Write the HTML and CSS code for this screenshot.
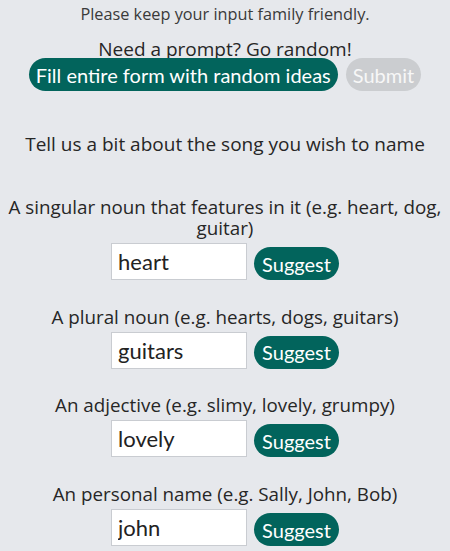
FILE: index.html
```html
<!DOCTYPE html>
<html lang="en">
<head>
    <meta charset="UTF-8">
    <meta name="viewport" content="width=device-width, initial-scale=1.0">
    <title>Song Namer</title>
    <link rel="stylesheet" href="styles.css">
</head>
<body>
    <div class="container">
        <p class="notice">Please keep your input family friendly.</p>

        <div class="random">
            <p>Need a prompt? Go random!</p>
            <div class="actions">
                <button type="button" class="btn">Fill entire form with random ideas</button>
                <button type="submit" class="btn btn-disabled" disabled>Submit</button>
            </div>
        </div>

        <p class="intro">Tell us a bit about the song you wish to name</p>

        <form class="fields">
            <div class="field">
                <label for="noun">A singular noun that features in it (e.g. heart, dog, guitar)</label>
                <div class="row">
                    <input id="noun" type="text" value="heart">
                    <button type="button" class="btn btn-small">Suggest</button>
                </div>
            </div>
            <div class="field">
                <label for="plural">A plural noun (e.g. hearts, dogs, guitars)</label>
                <div class="row">
                    <input id="plural" type="text" value="guitars">
                    <button type="button" class="btn btn-small">Suggest</button>
                </div>
            </div>
            <div class="field">
                <label for="adjective">An adjective (e.g. slimy, lovely, grumpy)</label>
                <div class="row">
                    <input id="adjective" type="text" value="lovely">
                    <button type="button" class="btn btn-small">Suggest</button>
                </div>
            </div>
            <div class="field">
                <label for="name">An personal name (e.g. Sally, John, Bob)</label>
                <div class="row">
                    <input id="name" type="text" value="john">
                    <button type="button" class="btn btn-small">Suggest</button>
                </div>
            </div>
        </form>
    </div>
</body>
</html>
```

FILE: styles.css
```css
body {
    margin: 0;
    background: #e6e8ec;
    font-family: "Open Sans", Arial, sans-serif;
    color: #262626;
}
.container {
    padding: 4px 6px;
    text-align: center;
}
p {
    margin: 0;
}
.notice {
    font-size: 16.3px;
    line-height: 20px;
    color: #3a3a3a;
}
.random {
    margin-top: 14px;
    font-size: 19px;
    line-height: 22px;
}
.actions {
    display: flex;
    justify-content: center;
    gap: 8px;
    margin-top: -2px;
}
.btn {
    background: #02645c;
    color: #fff;
    border: none;
    border-radius: 17px;
    font-family: Lato, "Open Sans", sans-serif;
    font-size: 20px;
    height: 33px;
    padding: 0 7px;
    cursor: pointer;
}
.btn-disabled {
    background: #cbcdd0;
    color: #f7f7f7;
    cursor: not-allowed;
}
.intro {
    margin-top: 41px;
    font-size: 19px;
    line-height: 24px;
}
.fields {
    margin-top: 41px;
    display: flex;
    flex-direction: column;
    gap: 26.7px;
}
.field label {
    display: block;
    font-size: 18.8px;
    line-height: 21px;
}
.row {
    display: flex;
    justify-content: center;
    align-items: flex-end;
    gap: 7px;
    margin-top: 4px;
}
.row input {
    width: 136px;
    height: 37px;
    box-sizing: border-box;
    border: 1px solid #c9ccd1;
    padding: 0 6px;
    font-family: Lato, "Open Sans", sans-serif;
    font-size: 22px;
    color: #222;
    background: #fff;
}
.btn-small {
    height: 33px;
    font-size: 20px;
    padding: 0 8px;
}
```
